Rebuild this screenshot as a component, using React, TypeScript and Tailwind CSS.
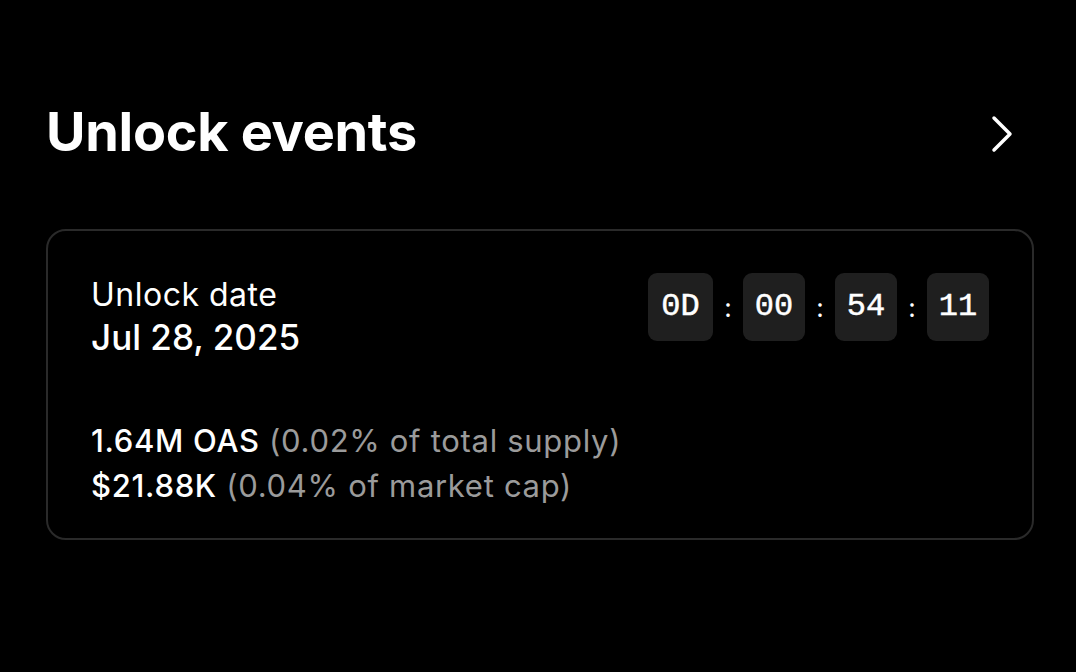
import React from "react";

function Chevron() {
  return (
    <svg width="24" height="38" viewBox="0 0 24 38" fill="none" className="block">
      <path d="M4 3 L20 19 L4 35" stroke="white" strokeWidth="3.5" strokeLinecap="round" strokeLinejoin="round" />
    </svg>
  );
}

function TimeBox({ value, wide = false }: { value: string; wide?: boolean }) {
  return (
    <div
      className={`flex h-[68px] items-center justify-center rounded-[9px] bg-[#1f1f1f] text-[32px] text-white [-webkit-text-stroke:0.5px_white] ${
        wide ? "w-[65px]" : "w-[62px]"
      }`}
      style={{ fontFamily: '"Liberation Mono", monospace' }}
    >
      {value}
    </div>
  );
}

function Colon() {
  return <span className="w-[30px] text-center text-[26px] text-white">:</span>;
}

export default function App() {
  return (
    <div
      className="min-h-[672px] w-[1076px] bg-black text-white"
      style={{ fontFamily: 'Inter, "Noto Sans", sans-serif' }}
    >
      <div className="ml-[46px] w-[988px] pt-[96px]">
        <div className="flex items-center justify-between pr-[20px]">
          <h2 className="text-[54px] font-bold leading-[72px] tracking-[-0.3px]">Unlock events</h2>
          <div className="mt-[4px]">
            <Chevron />
          </div>
        </div>

        <div className="mt-[61px] rounded-[20px] border-2 border-[#2a2a2a] px-[43px] pb-[30px] pt-[40px]">
          <div className="flex items-start justify-between">
            <div className="pt-[3px]">
              <p className="text-[32px] leading-[42px] tracking-[0.5px]">Unlock date</p>
              <p className="text-[35px] font-medium leading-[42px]">Jul 28, 2025</p>
            </div>
            <div className="mt-[2px] flex items-center">
              <TimeBox value="0D" wide />
              <Colon />
              <TimeBox value="00" />
              <Colon />
              <TimeBox value="54" />
              <Colon />
              <TimeBox value="11" />
            </div>
          </div>

          <div className="mt-[60px] text-[31px] leading-[45px] tracking-[0.7px]">
            <p>
              <span className="font-medium text-white">1.64M OAS</span>{" "}
              <span className="text-[#9b9b9b]">(0.02% of total supply)</span>
            </p>
            <p>
              <span className="font-medium text-white">$21.88K</span>{" "}
              <span className="text-[#9b9b9b]">(0.04% of market cap)</span>
            </p>
          </div>
        </div>
      </div>
    </div>
  );
}
